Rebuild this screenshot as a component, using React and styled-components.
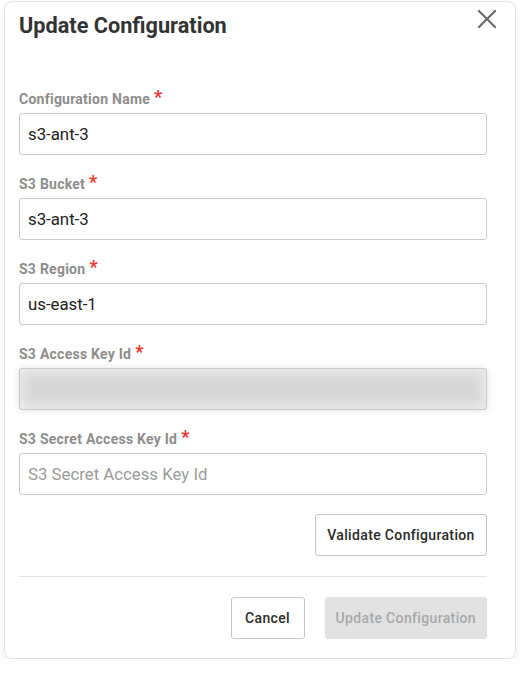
import React from 'react'
import styled, { createGlobalStyle } from 'styled-components'

const GlobalStyle = createGlobalStyle`
  body {
    margin: 0;
    background: #ffffff;
    font-family: Roboto, "Liberation Sans", Arial, sans-serif;
  }
`

const Dialog = styled.div`
  box-sizing: border-box;
  width: 512px;
  margin: 1px 0 0 4px;
  padding: 11px 28px 19px 14px;
  background: #fff;
  border: 1px solid #e2e2e2;
  border-radius: 8px;
  box-shadow: 0 6px 14px rgba(0, 0, 0, 0.07);
  position: relative;
`

const Header = styled.div`
  display: flex;
  align-items: center;
  justify-content: space-between;
  height: 26px;
  margin-bottom: 50px;
`

const Title = styled.h2`
  margin: 0;
  font-size: 21.7px;
  font-weight: 700;
  color: #333;
  line-height: 26px;
`

const CloseButton = styled.button`
  position: absolute;
  top: 6px;
  right: 17px;
  width: 22px;
  height: 22px;
  padding: 0;
  border: none;
  background: transparent;
  cursor: pointer;
  display: flex;
  align-items: center;
  justify-content: center;
`

const Field = styled.div`
  display: flex;
  flex-direction: column;
  margin-bottom: 19px;
`

const Label = styled.label`
  font-size: 14px;
  font-weight: 700;
  letter-spacing: 0.25px;
  color: #8d8d8d;
  line-height: 20px;
  margin-bottom: 4px;
  display: flex;
  align-items: center;
`

const Star = styled.span`
  color: #f0352a;
  font-size: 18px;
  margin-left: 4px;
  position: relative;
  top: -2px;
`

const Input = styled.input`
  box-sizing: border-box;
  height: 42px;
  width: 100%;
  padding: 0 8px;
  font-family: inherit;
  font-size: 16.8px;
  color: #222;
  border: 1px solid #c9c9c9;
  border-radius: 3px;
  outline: none;
  &::placeholder {
    color: #9a9a9a;
  }
`

const Masked = styled.div`
  box-sizing: border-box;
  height: 42px;
  border: 1px solid #c9c9c9;
  border-radius: 3px;
  background: #d7d7d7;
  box-shadow: inset 0 0 10px 5px #e9e9e9, 0 0 8px rgba(0, 0, 0, 0.12);
`

const Actions = styled.div`
  display: flex;
  justify-content: flex-end;
  gap: 20px;
`

const Button = styled.button`
  box-sizing: border-box;
  height: 42px;
  padding: 0 10px;
  font-family: inherit;
  font-size: 14px;
  font-weight: 500;
  letter-spacing: 0.35px;
  color: ${p => (p.disabled ? '#a8a8a8' : '#2b2b2b')};
  background: ${p => (p.disabled ? '#e2e2e2' : '#fff')};
  border: 1px solid ${p => (p.disabled ? '#e2e2e2' : '#c4c4c4')};
  border-radius: 3px;
  cursor: ${p => (p.disabled ? 'default' : 'pointer')};
  min-width: ${p => p.minWidth || 'auto'};
`

const Divider = styled.hr`
  border: none;
  border-top: 1px solid #e2e2e2;
  margin: 20px 0 20px;
`

const fields = [
  { label: 'Configuration Name', value: 's3-ant-3' },
  { label: 'S3 Bucket', value: 's3-ant-3' },
  { label: 'S3 Region', value: 'us-east-1' },
  { label: 'S3 Access Key Id', masked: true },
  { label: 'S3 Secret Access Key Id', placeholder: 'S3 Secret Access Key Id' },
]

const App = () => {
  return (
    <>
      <GlobalStyle />
      <Dialog>
        <Header>
          <Title>Update Configuration</Title>
        </Header>
        <CloseButton aria-label="close">
          <svg width="20" height="20" viewBox="0 0 20 20">
            <path d="M2 2 L18 18 M18 2 L2 18" stroke="#666" strokeWidth="2" strokeLinecap="square" />
          </svg>
        </CloseButton>

        {fields.map((f, i) => (
          <Field key={i}>
            <Label>
              {f.label}
              <Star>*</Star>
            </Label>
            {f.masked ? (
              <Masked />
            ) : (
              <Input defaultValue={f.value} placeholder={f.placeholder} />
            )}
          </Field>
        ))}

        <Actions>
          <Button minWidth="172px">Validate Configuration</Button>
        </Actions>
        <Divider />
        <Actions>
          <Button minWidth="74px">Cancel</Button>
          <Button disabled minWidth="162px">Update Configuration</Button>
        </Actions>
      </Dialog>
    </>
  )
}

export default App
